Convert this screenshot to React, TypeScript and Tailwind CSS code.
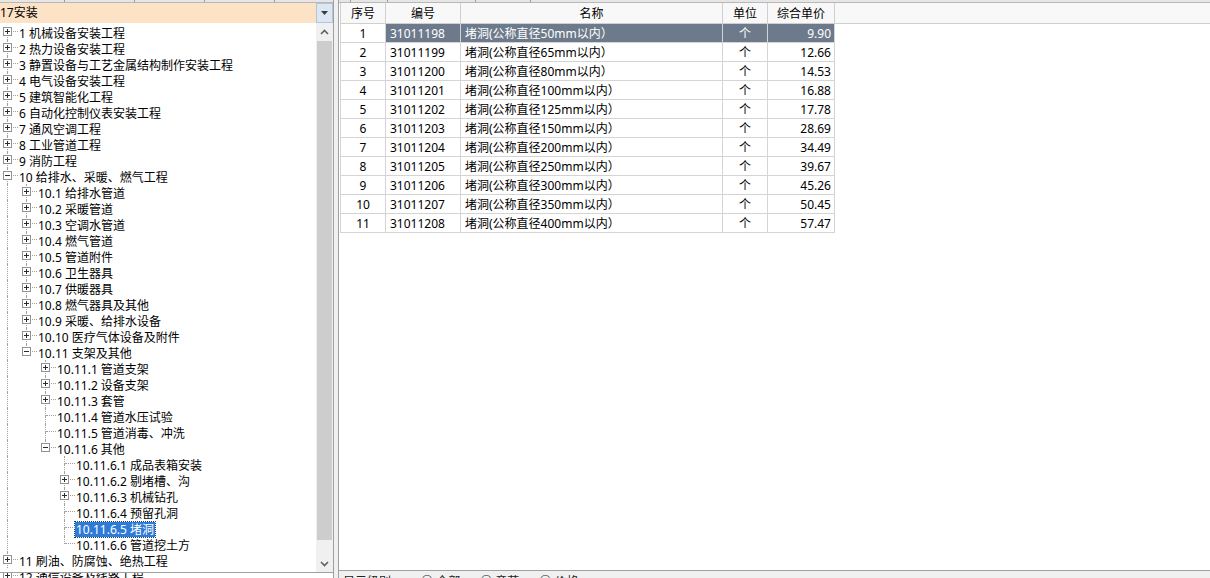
import React from 'react';

type Node = { text: string; depth: number; kind: 'plus' | 'minus' | 'leaf'; selected?: boolean };

const nodes: Node[] = [
  { text: '1 机械设备安装工程', depth: 0, kind: 'plus' },
  { text: '2 热力设备安装工程', depth: 0, kind: 'plus' },
  { text: '3 静置设备与工艺金属结构制作安装工程', depth: 0, kind: 'plus' },
  { text: '4 电气设备安装工程', depth: 0, kind: 'plus' },
  { text: '5 建筑智能化工程', depth: 0, kind: 'plus' },
  { text: '6 自动化控制仪表安装工程', depth: 0, kind: 'plus' },
  { text: '7 通风空调工程', depth: 0, kind: 'plus' },
  { text: '8 工业管道工程', depth: 0, kind: 'plus' },
  { text: '9 消防工程', depth: 0, kind: 'plus' },
  { text: '10 给排水、采暖、燃气工程', depth: 0, kind: 'minus' },
  { text: '10.1 给排水管道', depth: 1, kind: 'plus' },
  { text: '10.2 采暖管道', depth: 1, kind: 'plus' },
  { text: '10.3 空调水管道', depth: 1, kind: 'plus' },
  { text: '10.4 燃气管道', depth: 1, kind: 'plus' },
  { text: '10.5 管道附件', depth: 1, kind: 'plus' },
  { text: '10.6 卫生器具', depth: 1, kind: 'plus' },
  { text: '10.7 供暖器具', depth: 1, kind: 'plus' },
  { text: '10.8 燃气器具及其他', depth: 1, kind: 'plus' },
  { text: '10.9 采暖、给排水设备', depth: 1, kind: 'plus' },
  { text: '10.10 医疗气体设备及附件', depth: 1, kind: 'plus' },
  { text: '10.11 支架及其他', depth: 1, kind: 'minus' },
  { text: '10.11.1 管道支架', depth: 2, kind: 'plus' },
  { text: '10.11.2 设备支架', depth: 2, kind: 'plus' },
  { text: '10.11.3 套管', depth: 2, kind: 'plus' },
  { text: '10.11.4 管道水压试验', depth: 2, kind: 'leaf' },
  { text: '10.11.5 管道消毒、冲洗', depth: 2, kind: 'leaf' },
  { text: '10.11.6 其他', depth: 2, kind: 'minus' },
  { text: '10.11.6.1 成品表箱安装', depth: 3, kind: 'leaf' },
  { text: '10.11.6.2 剔堵槽、沟', depth: 3, kind: 'plus' },
  { text: '10.11.6.3 机械钻孔', depth: 3, kind: 'plus' },
  { text: '10.11.6.4 预留孔洞', depth: 3, kind: 'leaf' },
  { text: '10.11.6.5 堵洞', depth: 3, kind: 'leaf', selected: true },
  { text: '10.11.6.6 管道挖土方', depth: 3, kind: 'leaf' },
  { text: '11 刷油、防腐蚀、绝热工程', depth: 0, kind: 'plus' },
  { text: '12 通信设备及线路工程', depth: 0, kind: 'plus' },
];

// does the node at index i have a later sibling at the given depth
function hasNextAt(i: number, depth: number) {
  for (let j = i + 1; j < nodes.length; j++) {
    if (nodes[j].depth < depth) return false;
    if (nodes[j].depth === depth) return true;
  }
  return depth === 0;
}

const items = [
  ['31011198', '50', '9.90'],
  ['31011199', '65', '12.66'],
  ['31011200', '80', '14.53'],
  ['31011201', '100', '16.88'],
  ['31011202', '125', '17.78'],
  ['31011203', '150', '28.69'],
  ['31011204', '200', '34.49'],
  ['31011205', '250', '39.67'],
  ['31011206', '300', '45.26'],
  ['31011207', '350', '50.45'],
  ['31011208', '400', '57.47'],
];

const dot = 'absolute border-dotted border-[#a0a0a0]';

function Expander({ open }: { open: boolean }) {
  return (
    <div className="absolute left-[3px] top-[3px] h-[9px] w-[9px] border border-[#929292] bg-white">
      <div className="absolute left-[1px] top-[3px] h-px w-[5px] bg-[#2b2b2b]" />
      {!open && <div className="absolute left-[3px] top-[1px] h-[5px] w-px bg-[#2b2b2b]" />}
    </div>
  );
}

function TreeRow({ index }: { index: number }) {
  const node = nodes[index];
  const guides: boolean[] = [];
  for (let d = 0; d < node.depth; d++) {
    // find ancestor at depth d
    let a = index;
    while (a >= 0 && nodes[a].depth !== d) a--;
    guides.push(hasNextAt(a, d));
  }
  const next = hasNextAt(index, node.depth);
  return (
    <div className="flex h-4 items-center">
      {guides.map((g, i) => (
        <div key={i} className="relative h-full w-[19px] shrink-0">
          {g && <div className={`${dot} left-[7px] top-0 h-full border-l`} />}
        </div>
      ))}
      <div className="relative h-full w-[19px] shrink-0">
        {index > 0 && <div className={`${dot} left-[7px] top-0 h-2 border-l`} />}
        {next && <div className={`${dot} left-[7px] top-2 h-2 border-l`} />}
        <div className={`${dot} left-[8px] top-[7px] w-[10px] border-t`} />
        {node.kind !== 'leaf' && <Expander open={node.kind === 'minus'} />}
      </div>
      <span
        className={`-ml-px mt-[2px] whitespace-nowrap px-px text-[12px] leading-[15px] ${
          node.selected ? 'bg-[#2d7bd6] text-white outline-1 outline-dotted outline-[#1a3f70]' : 'text-black'
        }`}
      >
        {node.text}
      </span>
    </div>
  );
}

function Chevron({ down }: { down?: boolean }) {
  return (
    <svg width="9" height="6" viewBox="0 0 9 6">
      <polyline
        points={down ? '1,1 4.5,4.5 8,1' : '1,5 4.5,1.5 8,5'}
        fill="none"
        stroke="#606060"
        strokeWidth="1.6"
      />
    </svg>
  );
}

export default function App() {
  return (
    <div className="flex h-[578px] w-[1210px] overflow-hidden bg-[#f0f0f0] font-['Noto_Sans','Noto_Sans_CJK_SC',sans-serif] text-[12px] text-black">
      {/* left: chapter tree */}
      <div className="flex w-[334px] shrink-0 flex-col border-r border-[#a0a0a0]">
        <div className="flex h-[3px] border-b border-[#b8b8b8] bg-[#e6e6e6]">
          <div className="w-[65px] border-r border-[#9a9a9a]" />
          <div className="w-[70px] border-r border-[#9a9a9a]" />
          <div className="w-[70px] border-r border-[#9a9a9a]" />
          <div className="w-[70px] border-r border-[#9a9a9a]" />
        </div>
        <div className="flex h-[20px]">
          <div className="flex-1 overflow-hidden whitespace-nowrap bg-[#fce3c6] text-[12px] leading-[20px]">17安装</div>
          <div className="flex w-[17px] items-center justify-center border border-[#b3c4d9] bg-[#dde7f3]">
            <svg width="7" height="4" viewBox="0 0 7 4">
              <polygon points="0,0 7,0 3.5,4" fill="#3c3c3c" />
            </svg>
          </div>
        </div>
        <div className="flex h-[549px] bg-white">
          <div className="flex-1 overflow-hidden pt-px">
            {nodes.slice(0, 34).map((_, i) => (
              <TreeRow key={i} index={i} />
            ))}
          </div>
          <div className="flex w-[17px] flex-col bg-[#f0f0f0]">
            <div className="flex h-[18px] items-center justify-center">
              <Chevron />
            </div>
            <div className="mx-px h-[499px] bg-[#cdcdcd]" />
            <div className="flex-1" />
            <div className="flex h-[17px] items-center justify-center">
              <Chevron down />
            </div>
          </div>
        </div>
        <div className="h-px bg-[#a0a0a0]" />
        <div className="flex-1 overflow-hidden bg-white">
          <div className="-mt-[5px]">
            <TreeRow index={34} />
          </div>
        </div>
      </div>

      <div className="w-[4px] shrink-0" />

      {/* right: item grid */}
      <div className="flex flex-1 flex-col border-l border-[#a0a0a0]">
        <div className="flex h-[3px] border-b border-[#b8b8b8] bg-[#e6e6e6]">
          <div className="w-[12px] border-r border-[#9a9a9a]" />
          <div className="w-[37px] border-r border-[#9a9a9a]" />
          <div className="w-[88px] border-r border-[#9a9a9a]" />
          <div className="w-[55px] border-r border-[#9a9a9a]" />
        </div>
        <div className="flex-1 bg-white pl-px">
          <div className="flex h-[21px] border-b border-[#d0d0d0] bg-[#f8f8f8] text-center leading-[22px]">
            <div className="w-[46px] border-x border-[#d0d0d0]">序号</div>
            <div className="w-[75px] border-r border-[#d0d0d0]">编号</div>
            <div className="w-[262px] border-r border-[#d0d0d0]">名称</div>
            <div className="w-[45px] border-r border-[#d0d0d0]">单位</div>
            <div className="w-[67px] border-r border-[#d0d0d0]">综合单价</div>
          </div>
          {items.map(([code, dia, price], i) => {
            const sel = i === 0;
            const cell = sel ? 'bg-[#6d7a8b] text-white' : '';
            return (
              <div key={code} className="flex h-[19px] w-[496px] leading-[20px]">
                <div className="w-[46px] border-x border-b border-[#d4d4d4] bg-white text-center">{i + 1}</div>
                <div className={`w-[75px] border-r border-b border-[#d4d4d4] pl-[4px] ${cell}`}>{code}</div>
                <div className={`w-[262px] border-r border-b border-[#d4d4d4] pl-[4px] ${cell}`}>
                  堵洞(公称直径{dia}mm以内）
                </div>
                <div className={`w-[45px] border-r border-b border-[#d4d4d4] text-center ${cell}`}>个</div>
                <div className={`w-[67px] border-r border-b border-[#d4d4d4] pr-[3px] text-right ${cell}`}>{price}</div>
              </div>
            );
          })}
        </div>
        <div className="h-px bg-[#a0a0a0]" />
        <div className="flex h-[7px] items-start gap-[10px] overflow-hidden pl-[4px] text-[12px] leading-[15px] text-[#222]">
          <span className="mt-[3px]">显示级别：</span>
          <span className="mt-[3px] ml-[8px]">○ 全部</span>
          <span className="mt-[3px] ml-[10px]">○ 章节</span>
          <span className="mt-[3px] ml-[10px]">○ 价格</span>
        </div>
      </div>
    </div>
  );
}
